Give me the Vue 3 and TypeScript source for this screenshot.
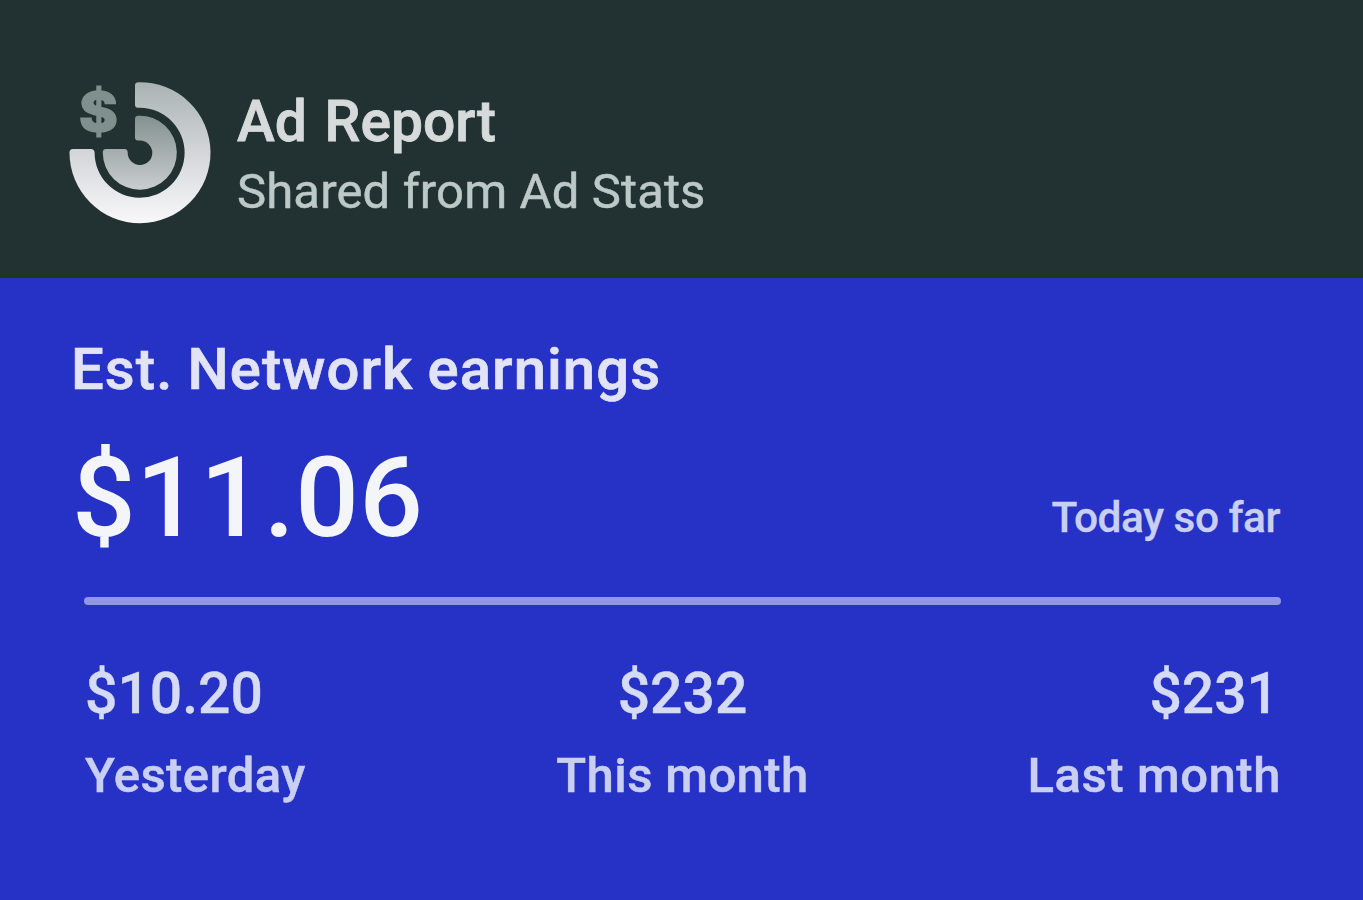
<script setup lang="ts">
interface Period {
  amount: string
  label: string
  align: 'start' | 'center' | 'end'
}

const periods: Period[] = [
  { amount: '$10.20', label: 'Yesterday', align: 'start' },
  { amount: '$232', label: 'This month', align: 'center' },
  { amount: '$231', label: 'Last month', align: 'end' },
]
</script>

<template>
  <main class="report">
    <header class="header">
      <svg class="logo" viewBox="0 0 152 152" aria-hidden="true">
        <defs>
          <linearGradient id="outer-fill" x1="0" y1="0" x2="0" y2="1">
            <stop offset="0" stop-color="#a9b2b2" />
            <stop offset="0.5" stop-color="#d4d6d9" />
            <stop offset="1" stop-color="#f8f8fa" />
          </linearGradient>
          <linearGradient id="inner-fill" x1="0" y1="0" x2="0" y2="1">
            <stop offset="0" stop-color="#849191" />
            <stop offset="1" stop-color="#c9cdce" />
          </linearGradient>
        </defs>
        <text class="logo-sign" transform="translate(34.5 54.5) scale(1.09 1)" text-anchor="middle">$</text>
        <path
          fill="url(#outer-fill)"
          d="M71 9.500Q71 6.200 74.500 6.200A70.500 70.500 0 1 1 5.500 76.500Q5.500 73 9 73H27Q30.300 73 30.600 76.500A45 45 0 1 0 76 31.700H74Q71 31.700 71 28.500Z"
        />
        <path
          fill="url(#inner-fill)"
          d="M71 43Q71 39.700 74.500 39.700A37 37 0 1 1 38.800 77Q38.500 73 42 73H61Q63.500 73 63.700 76.500A12.300 12.300 0 1 0 76 64.500H74Q71 64.500 71 61.500Z"
        />
      </svg>
      <div class="heading">
        <h1 class="title">Ad Report</h1>
        <p class="source">Shared from Ad Stats</p>
      </div>
    </header>
    <section class="body">
      <h2 class="metric">Est. Network earnings</h2>
      <div class="current">
        <strong class="total">$11.06</strong>
        <span class="today">Today so far</span>
      </div>
      <div class="rule"></div>
      <div class="periods">
        <div v-for="p in periods" :key="p.label" class="period" :class="p.align">
          <span class="amount">{{ p.amount }}</span>
          <span class="label">{{ p.label }}</span>
        </div>
      </div>
    </section>
  </main>
</template>

<style>
body {
  margin: 0;
  background: #2631c5;
}
</style>

<style scoped>
.report {
  width: 1363px;
  height: 900px;
  overflow: hidden;
  display: flex;
  flex-direction: column;
  font-family: Roboto, "Liberation Sans", sans-serif;
  font-weight: 500;
  white-space: nowrap;
}
.header {
  box-sizing: border-box;
  height: 278px;
  padding: 76px 0 0 64px;
  display: flex;
  align-items: flex-start;
  gap: 21px;
  background: #223233;
  border-bottom: 3px solid #1a381c;
}
.logo {
  width: 152px;
  height: 152px;
  flex: none;
}
.logo-sign {
  font-family: Inter, sans-serif;
  font-weight: 800;
  font-size: 54px;
  fill: #7f908e;
  stroke: #7f908e;
  stroke-width: 1.5px;
}
.heading {
  padding-top: 10px;
}
.title {
  margin: 0;
  font-size: 57px;
  line-height: 72px;
  font-weight: 500;
  letter-spacing: 0;
  word-spacing: 3.5px;
  -webkit-text-stroke: 0.8px #d6dadb;
  color: #d6dadb;
}
.source {
  margin: 0;
  font-size: 49px;
  line-height: 67px;
  font-weight: 400;
  letter-spacing: 0.14px;
  -webkit-text-stroke: 0.5px #bdc8c8;
  color: #bdc8c8;
}
.body {
  flex: 1;
  box-sizing: border-box;
  padding: 54px 82px 0 84px;
  background: #2631c5;
}
.metric {
  margin: 0 0 0 -13px;
  font-size: 58px;
  line-height: 74px;
  font-weight: 500;
  letter-spacing: 1.08px;
  word-spacing: -1.3px;
  -webkit-text-stroke: 0.7px #e2e4f6;
  color: #e2e4f6;
}
.current {
  display: flex;
  align-items: baseline;
  justify-content: space-between;
  margin-left: -12px;
  height: 191px;
}
.total {
  font-size: 112px;
  line-height: 184px;
  font-weight: 500;
  letter-spacing: 0.3px;
  color: #f4f5f8;
}
.today {
  position: relative;
  top: -4px;
  margin-right: 1px;
  font-size: 42.500px;
  line-height: 56px;
  letter-spacing: -0.5px;
  -webkit-text-stroke: 0.3px #c9cff3;
  color: #c9cff3;
}
.rule {
  height: 8px;
  border-radius: 4px;
  background: #9297e3;
}
.periods {
  display: grid;
  grid-template-columns: repeat(3, 1fr);
  padding-top: 53px;
}
.period {
  display: flex;
  flex-direction: column;
}
.start {
  padding-left: 1px;
}
.center {
  align-items: center;
}
.end {
  align-items: flex-end;
}
.amount {
  font-size: 57px;
  line-height: 72px;
  -webkit-text-stroke: 0.4px #d5daf5;
  color: #d5daf5;
}
.end .amount {
  padding-right: 2px;
}
.label {
  font-size: 49px;
  line-height: 92px;
  letter-spacing: 0.4px;
  -webkit-text-stroke: 0.5px #c9cff3;
  color: #c9cff3;
}
.end .label {
  letter-spacing: 0.55px;
}
</style>
